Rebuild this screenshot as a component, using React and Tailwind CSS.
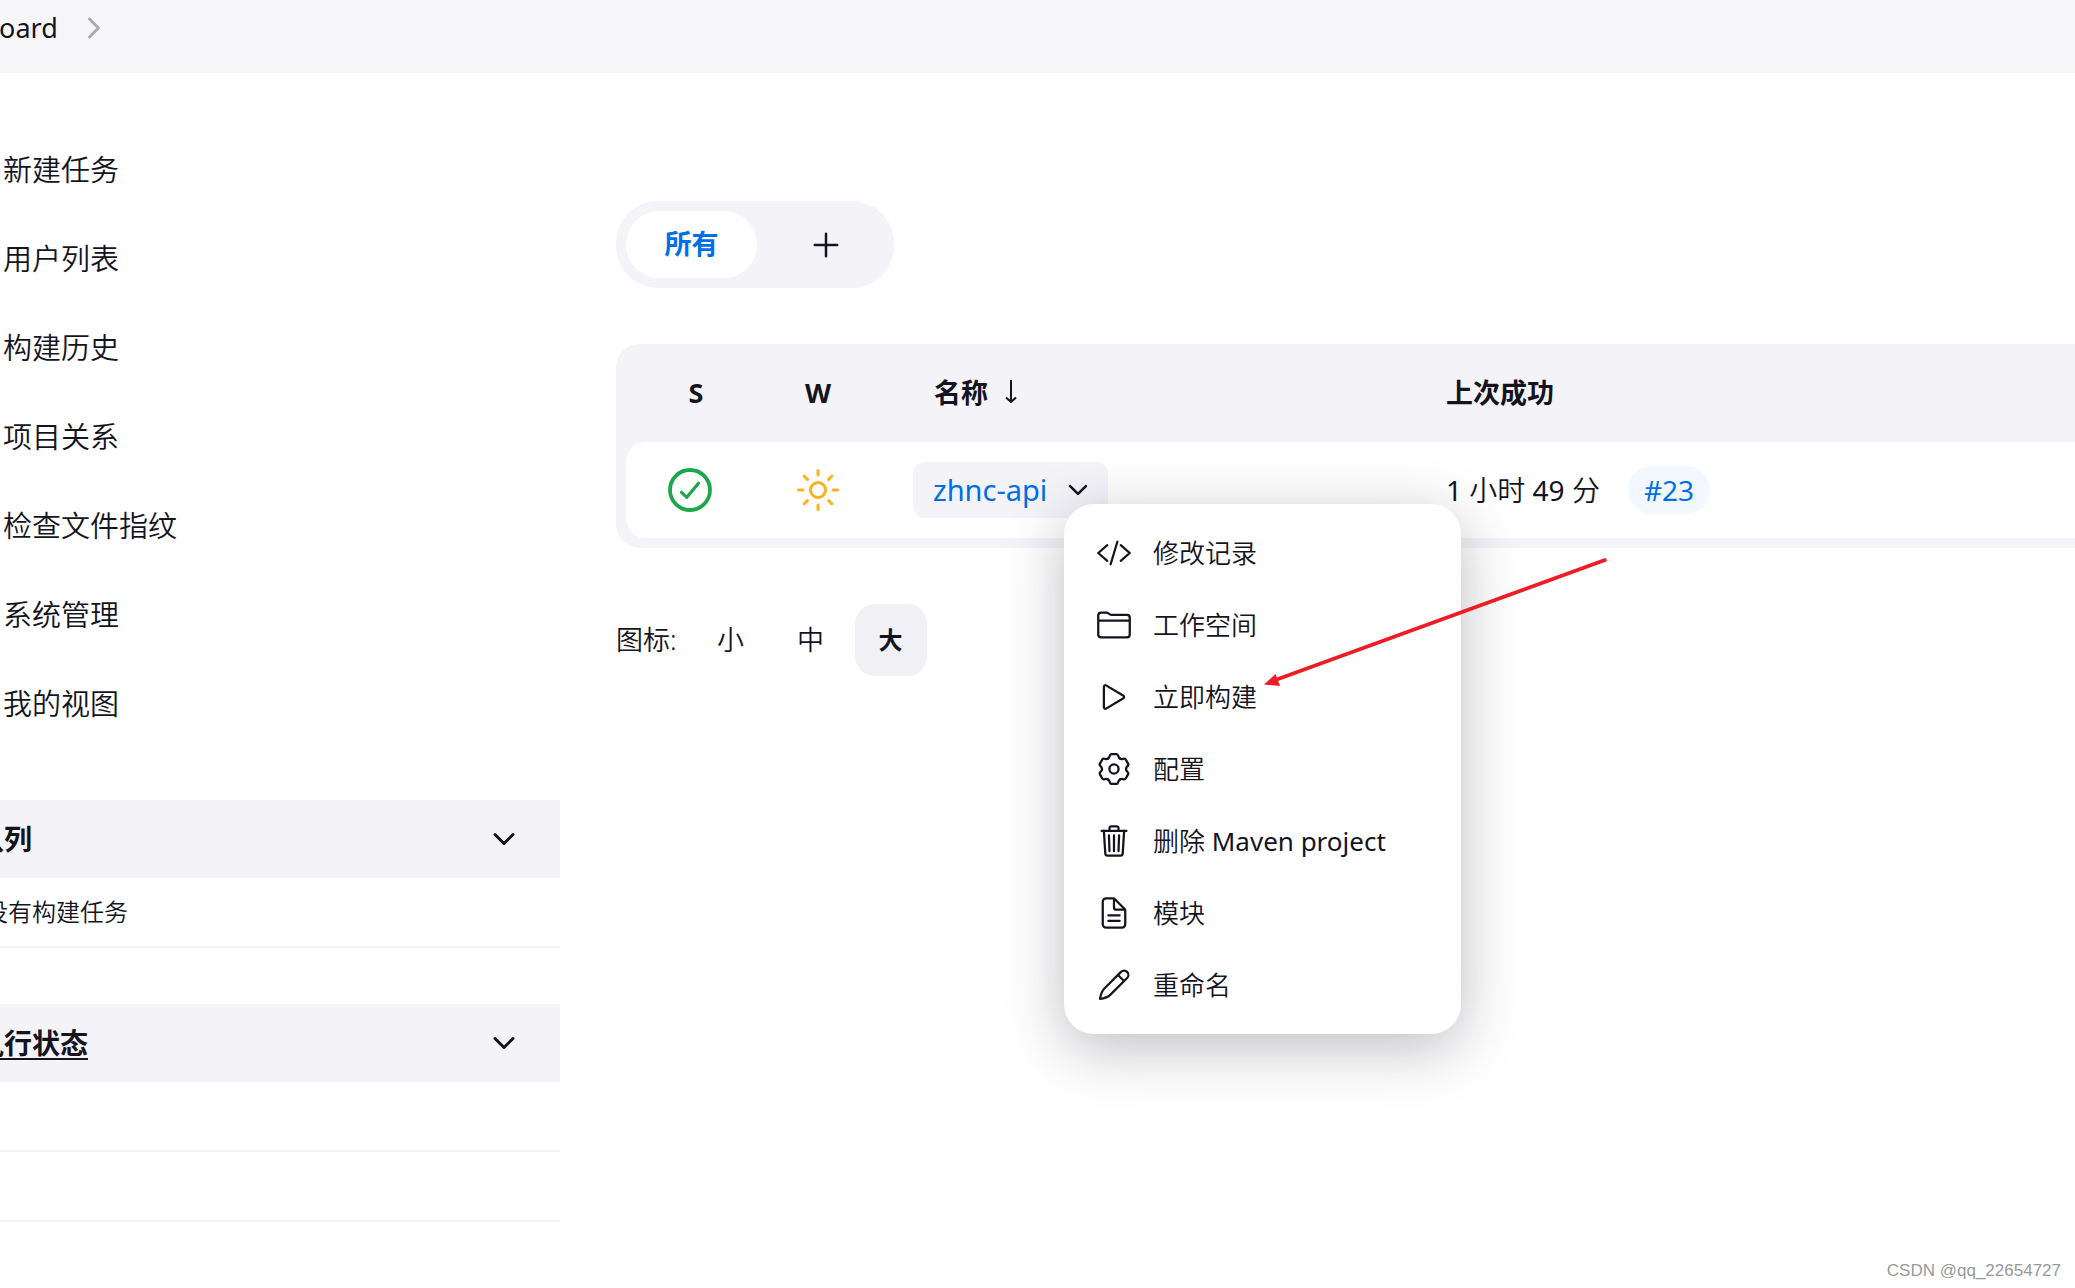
import { useState } from "react";
import {
  IoAddOutline,
  IoChevronDownOutline,
  IoChevronForwardOutline,
  IoCodeSlashOutline,
  IoDocumentTextOutline,
  IoFolderOutline,
  IoPlayOutline,
  IoSunnyOutline,
  IoTrashOutline,
} from "react-icons/io5";

const tasks = [
  "新建任务",
  "用户列表",
  "构建历史",
  "项目关系",
  "检查文件指纹",
  "系统管理",
  "我的视图",
];

const sizes = ["小", "中", "大"];

const menuItems = [
  { label: "修改记录", icon: <IoCodeSlashOutline size={36} /> },
  { label: "工作空间", icon: <IoFolderOutline size={36} /> },
  { label: "立即构建", icon: <IoPlayOutline size={36} /> },
  { label: "配置", icon: <GearIcon /> },
  {
    label: (
      <span>
        删除 <span className="font-normal">Maven project</span>
      </span>
    ),
    icon: <IoTrashOutline size={36} />,
  },
  { label: "模块", icon: <IoDocumentTextOutline size={36} /> },
  { label: "重命名", icon: <PencilIcon /> },
];

// one tooth, turned six times round the centre
function GearIcon() {
  return (
    <svg
      width="36"
      height="36"
      viewBox="0 0 36 36"
      fill="none"
      stroke="currentColor"
      strokeWidth="2.3"
      strokeLinecap="round"
      strokeLinejoin="round"
    >
      {[0, 60, 120, 180, 240, 300].map((angle) => (
        <path
          key={angle}
          transform={`rotate(${angle} 18 18)`}
          d="M12 7.6C13.4 6.8 13.5 6 13.8 4.800Q14.200 3.100 15.600 3.100H20.400Q21.800 3.100 22.200 4.800C22.500 6 22.600 6.800 24 7.600"
        />
      ))}
      <circle cx="18" cy="18" r="4.600" />
    </svg>
  );
}

function PencilIcon() {
  return (
    <svg
      width="36"
      height="36"
      viewBox="0 0 36 36"
      fill="none"
      stroke="currentColor"
      strokeWidth="2.2"
      strokeLinecap="round"
      strokeLinejoin="round"
    >
      <path d="M25 4.9 8.4 21.5C5.6 24.4 4.6 28 4 32c4-.6 7.6-1.6 10.500-4.400L31.100 11A4.300 4.300 0 0 0 25 4.900z" />
      <path d="m22 8 6 6" />
    </svg>
  );
}

function SuccessIcon() {
  return (
    <svg
      width="44"
      height="44"
      viewBox="0 0 44 44"
      fill="none"
      stroke="currentColor"
      strokeLinecap="round"
      strokeLinejoin="round"
      role="img"
      aria-label="成功"
    >
      <circle cx="22" cy="22" r="20" strokeWidth="3.800" />
      <path d="m13.500 24.300 5.300 5 11.700-14" strokeWidth="3.200" />
    </svg>
  );
}

function Pane({ title, underline, children }) {
  return (
    <section>
      <div className="flex h-[78px] items-center justify-between bg-[#f3f3f8] pl-8 pr-10">
        <h2
          className={
            underline
              ? "text-[28px] font-bold underline decoration-2 underline-offset-4"
              : "text-[28px] font-bold"
          }
        >
          {title}
        </h2>
        <button aria-label="折叠">
          <IoChevronDownOutline size={32} />
        </button>
      </div>
      {children}
    </section>
  );
}

function PaneRow({ children }) {
  return (
    <div className="flex h-[70px] items-center border-b-2 border-[#f3f3f8] pl-6 text-2xl font-[350]">
      {children}
    </div>
  );
}

function JobMenu() {
  return (
    <div className="absolute left-[151px] top-[42px] z-10 w-[397px] rounded-[30px] bg-white py-[13px] shadow-[0_14px_60px_rgba(20,20,40,0.28)]">
      <ul>
        {menuItems.map((item, i) => (
          <li key={i}>
            <button className="flex h-[72px] w-full items-center gap-[21px] pl-8 text-[26px] font-[350]">
              {item.icon}
              {item.label}
            </button>
          </li>
        ))}
      </ul>

      {/* pointer to the build action */}
      <svg
        className="pointer-events-none absolute left-[196px] top-[50px]"
        width="352"
        height="140"
        viewBox="0 0 352 140"
      >
        <path
          d="M345 6 14 126.500"
          stroke="#ee1c25"
          strokeWidth="3.600"
          strokeLinecap="round"
        />
        <path d="M4 130.500 15.500 120l4.500 12z" fill="#ee1c25" />
      </svg>
    </div>
  );
}

export default function App() {
  const [size, setSize] = useState("大");
  const [open, setOpen] = useState(true);

  return (
    <div className="relative min-h-screen overflow-hidden bg-white font-['Noto_Sans','Noto_Sans_CJK_SC',sans-serif] text-[#14141f]">
      {/* Breadcrumbs */}
      <header className="flex h-[73px] items-start bg-[#f6f6f8] pt-2">
        <nav className="-ml-[82px] flex h-10 items-center gap-5 text-[27px]">
          <a href="#">Dashboard</a>
          <IoChevronForwardOutline size={32} className="text-[#a9a9ba]" />
        </nav>
      </header>

      <div className="flex">
        {/* Sidebar */}
        <aside className="-ml-[112px] w-[672px] shrink-0 pt-[52px]">
          <nav className="mb-[52px] pl-[115px]">
            {tasks.map((task) => (
              <a
                key={task}
                href="#"
                className="flex h-[89px] items-center text-[29px] font-[350]"
              >
                {task}
              </a>
            ))}
          </nav>

          <div className="space-y-14">
            <Pane title="构建队列">
              <PaneRow>队列中没有构建任务</PaneRow>
            </Pane>
            <Pane title="构建执行状态" underline>
              <PaneRow />
              <PaneRow />
            </Pane>
          </div>
        </aside>

        {/* Main panel */}
        <main className="-mr-16 ml-14 min-w-0 flex-1 pt-32">
          <div className="flex w-fit gap-[11px] rounded-[42px] bg-[#f3f3f8] p-[10px]">
            <button className="h-[67px] w-[131px] rounded-[33px] bg-white text-[27px] font-bold text-[#006fe6]">
              所有
            </button>
            <button
              aria-label="新建视图"
              className="flex h-[67px] w-[116px] items-center justify-center"
            >
              <IoAddOutline size={40} />
            </button>
          </div>

          <div className="mt-14 rounded-3xl bg-[#f3f3f8] px-[10px] pb-[10px]">
            <table className="w-full table-fixed border-separate border-spacing-0 text-[27px]">
              <thead>
                <tr className="h-[98px] text-left">
                  <th className="w-32 pl-3 text-center">S</th>
                  <th className="w-32 text-center">W</th>
                  <th className="w-[512px] pl-[52px]">
                    名称
                    <svg
                      className="ml-4 inline-block align-baseline"
                      width="14"
                      height="26"
                      viewBox="0 0 14 26"
                      fill="none"
                      stroke="currentColor"
                      strokeWidth="2"
                    >
                      <path d="M7 3v22M2 20.500 7 25l5-4.500" />
                    </svg>
                  </th>
                  <th className="pl-[52px]">上次成功</th>
                </tr>
              </thead>
              <tbody>
                <tr className="h-24">
                  <td className="rounded-l-[20px] bg-white text-[#1ea64b]">
                    <div className="flex justify-center">
                      <SuccessIcon />
                    </div>
                  </td>
                  <td className="bg-white text-[#ffb11f]">
                    <div className="flex justify-center">
                      <IoSunnyOutline size={48} />
                    </div>
                  </td>
                  <td className="bg-white pl-[31px]">
                    <div className="relative w-fit">
                      <button
                        onClick={() => setOpen(!open)}
                        className="flex h-14 w-[195px] items-center justify-between rounded-xl bg-[#f3f3f8] pl-5 pr-4 text-[29px]"
                      >
                        <span className="text-[#006fe6]">zhnc-api</span>
                        <IoChevronDownOutline size={28} />
                      </button>
                      {open && <JobMenu />}
                    </div>
                  </td>
                  <td className="bg-white pl-[52px]">
                    <div className="flex items-center gap-7 text-[28px]">
                      <span>
                        1 <span className="font-[350]">小时</span> 49{" "}
                        <span className="font-[350]">分</span>
                      </span>
                      <a
                        href="#"
                        className="flex h-12 items-center rounded-3xl bg-[#f2f8fe] px-4 text-[#006fe6]"
                      >
                        #23
                      </a>
                    </div>
                  </td>
                </tr>
              </tbody>
            </table>
          </div>

          <div className="mt-14 flex items-center text-[27px]">
            <span className="mr-[18px] font-[350]">图标:</span>
            <div className="flex gap-2">
              {sizes.map((s) => (
                <button
                  key={s}
                  onClick={() => setSize(s)}
                  className={
                    s === size
                      ? "size-[72px] rounded-[20px] bg-[#f1f0f5] text-2xl font-bold"
                      : "size-[72px] rounded-[20px] font-[350]"
                  }
                >
                  {s}
                </button>
              ))}
            </div>
          </div>
        </main>
      </div>

      <p className="absolute bottom-[5px] right-[14px] font-['Liberation_Sans',sans-serif] text-[17px] text-[#999999]">
        CSDN @qq_22654727
      </p>
    </div>
  );
}
